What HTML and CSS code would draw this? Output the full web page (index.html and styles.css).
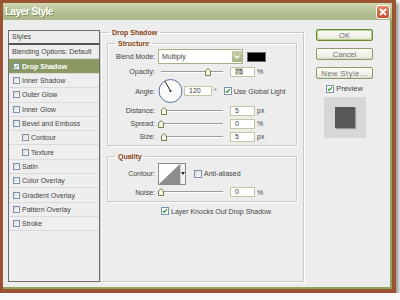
FILE: index.html
```html
<!DOCTYPE html>
<html lang="en">
<head>
  <meta charset="UTF-8" />
  <title>Layer Style</title>
  <link rel="stylesheet" href="styles.css">
</head>
<body>

  <div class="window">
    <div class="title-bar">
      <span class="title">Layer Style</span>
      <span class="close-btn">
        <svg width="8" height="8" viewBox="0 0 8 8"><path d="M1 1 L7 7 M7 1 L1 7" stroke="#fff" stroke-width="1.8"/></svg>
      </span>
    </div>

    <div class="dialog">
      <div class="style-list">
        <div class="list-head">Styles</div>
        <div class="list-row blend">Blending Options: Default</div>
        <div class="list-row selected">
          <span class="check on"><svg viewBox="0 0 8 8" width="100%" height="100%"><path d="M1.2 3.8 L3 5.8 L6.6 1.6" fill="none" stroke="#1d9a1d" stroke-width="1.6"/></svg></span>Drop Shadow
        </div>
        <div class="list-row"><span class="check"></span>Inner Shadow</div>
        <div class="list-row"><span class="check"></span>Outer Glow</div>
        <div class="list-row"><span class="check"></span>Inner Glow</div>
        <div class="list-row"><span class="check"></span>Bevel and Emboss</div>
        <div class="list-row sub"><span class="check"></span>Contour</div>
        <div class="list-row sub"><span class="check"></span>Texture</div>
        <div class="list-row"><span class="check"></span>Satin</div>
        <div class="list-row"><span class="check"></span>Color Overlay</div>
        <div class="list-row"><span class="check"></span>Gradient Overlay</div>
        <div class="list-row"><span class="check"></span>Pattern Overlay</div>
        <div class="list-row"><span class="check"></span>Stroke</div>
      </div>

      <fieldset class="main-group">
        <legend>Drop Shadow</legend>

        <fieldset class="sub-group">
          <legend>Structure</legend>
          <div class="row blend-row">
            <label>Blend Mode:</label>
            <div class="select">Multiply
              <span class="drop-btn"><svg width="6" height="4" viewBox="0 0 6 4"><path d="M0.5 0.5 L3 3 L5.5 0.5" fill="none" stroke="#fff" stroke-width="1.2"/></svg></span>
            </div>
            <span class="swatch"></span>
          </div>
          <div class="row opacity-row">
            <label>Opacity:</label>
            <div class="slider"><svg class="thumb" style="margin-left:47px" width="6" height="8" viewBox="0 0 6 8"><path d="M0.5 3 L3 0.5 L5.5 3 L5.5 7.5 L0.5 7.5 Z" fill="#f4f6ec" stroke="#6f8048"/></svg></div>
            <span class="field"><span class="hl">75</span></span><span class="unit">%</span>
          </div>
          <div class="row angle-row">
            <label>Angle:</label>
            <svg class="dial" width="25" height="26" viewBox="0 0 25 26">
              <circle cx="12.5" cy="13" r="11.5" fill="#fbfbfb" stroke="#5d6e9c"/>
              <path d="M12.5 13 L6.8 3.1" stroke="#222" stroke-width="1"/>
              <circle cx="12.5" cy="13" r="1.1" fill="#222"/>
            </svg>
            <span class="field wide">120</span><span class="unit">°</span>
            <span class="check box on gap"><svg viewBox="0 0 8 8" width="100%" height="100%"><path d="M1.2 3.8 L3 5.8 L6.6 1.6" fill="none" stroke="#1d9a1d" stroke-width="1.6"/></svg></span>
            <span class="check-label">Use Global Light</span>
          </div>
          <div class="row">
            <label>Distance:</label>
            <div class="slider"><svg class="thumb" style="margin-left:3px" width="6" height="8" viewBox="0 0 6 8"><path d="M0.5 3 L3 0.5 L5.5 3 L5.5 7.5 L0.5 7.5 Z" fill="#f4f6ec" stroke="#6f8048"/></svg></div>
            <span class="field">5</span><span class="unit">px</span>
          </div>
          <div class="row">
            <label>Spread:</label>
            <div class="slider"><svg class="thumb" style="margin-left:0px" width="6" height="8" viewBox="0 0 6 8"><path d="M0.5 3 L3 0.5 L5.5 3 L5.5 7.5 L0.5 7.5 Z" fill="#f4f6ec" stroke="#6f8048"/></svg></div>
            <span class="field">0</span><span class="unit">%</span>
          </div>
          <div class="row">
            <label>Size:</label>
            <div class="slider"><svg class="thumb" style="margin-left:3px" width="6" height="8" viewBox="0 0 6 8"><path d="M0.5 3 L3 0.5 L5.5 3 L5.5 7.5 L0.5 7.5 Z" fill="#f4f6ec" stroke="#6f8048"/></svg></div>
            <span class="field">5</span><span class="unit">px</span>
          </div>
        </fieldset>

        <fieldset class="sub-group quality">
          <legend>Quality</legend>
          <div class="row contour-row">
            <label>Contour:</label>
            <div class="contour">
              <svg width="21" height="20" viewBox="0 0 21 20"><rect width="21" height="20" fill="#fff"/><path d="M0 20 L21 0 L21 20 Z" fill="#8e8e8e"/></svg>
              <span class="contour-arrow"><svg width="4" height="3" viewBox="0 0 4 3"><path d="M0 0 L4 0 L2 3 Z" fill="#222"/></svg></span>
            </div>
            <span class="check box gap-wide"></span>
            <span class="check-label">Anti-aliased</span>
          </div>
          <div class="row noise-row">
            <label>Noise:</label>
            <div class="slider"><svg class="thumb" style="margin-left:0px" width="6" height="8" viewBox="0 0 6 8"><path d="M0.5 3 L3 0.5 L5.5 3 L5.5 7.5 L0.5 7.5 Z" fill="#f4f6ec" stroke="#6f8048"/></svg></div>
            <span class="field">0</span><span class="unit">%</span>
          </div>
        </fieldset>

        <div class="row knock-row">
          <span class="check box on"><svg viewBox="0 0 8 8" width="100%" height="100%"><path d="M1.2 3.8 L3 5.8 L6.6 1.6" fill="none" stroke="#1d9a1d" stroke-width="1.6"/></svg></span>
          <span class="check-label">Layer Knocks Out Drop Shadow</span>
        </div>
      </fieldset>

      <div class="actions">
        <div class="btn default">OK</div>
        <div class="btn">Cancel</div>
        <div class="btn new-style">New Style...</div>
        <div class="preview-row">
          <span class="check box on"><svg viewBox="0 0 8 8" width="100%" height="100%"><path d="M1.2 3.8 L3 5.8 L6.6 1.6" fill="none" stroke="#1d9a1d" stroke-width="1.6"/></svg></span>
          <span class="preview-label">Preview</span>
        </div>
        <div class="preview-box"><span class="preview-swatch"></span></div>
      </div>
    </div>
  </div>

</body>
</html>
```

FILE: styles.css
```css
* {
  box-sizing: border-box;
}

body {
  margin: 0;
  background: #f8f8f8;
  font-family: "Liberation Sans", Arial, sans-serif;
  font-size: 7px;
  color: #444;
}

.window {
  width: 396px;
  height: 293px;
  display: flex;
  flex-direction: column;
  border: 3px solid #9c5331;
  border-right-width: 4px;
  border-bottom-width: 4px;
  box-shadow: 3px 3px 3px rgba(0, 0, 0, 0.35);
}

.title-bar {
  height: 17px;
  display: flex;
  justify-content: space-between;
  align-items: center;
  padding: 0 2px;
  background: linear-gradient(#cfd8b3, #b8c496 45%, #a9b685);
}

.title {
  color: #fff;
  font-size: 10px;
  font-weight: bold;
  letter-spacing: -0.5px;
  text-shadow: 1px 1px 0 rgba(70, 80, 40, 0.45);
}

.close-btn {
  width: 14px;
  height: 14px;
  display: flex;
  justify-content: center;
  align-items: center;
  border: 1px solid #fff;
  border-radius: 3px;
  background: linear-gradient(#e68d6a, #c84a2d);
}

.dialog {
  flex: 1;
  display: flex;
  padding: 10px 7px 5px 5px;
  background: #ededed;
  border-right: 2px solid #8ea45f;
  border-bottom: 2px solid #8ea45f;
}

/* style list on the left */
.style-list {
  width: 92px;
  border: 1px solid #6e6e6e;
  background: #eeeeee;
}

.list-head {
  height: 14px;
  line-height: 12px;
  padding-left: 3px;
  border-bottom: 2px solid #555;
}

.list-row {
  height: 14.3px;
  display: flex;
  align-items: center;
  gap: 2px;
  padding-left: 4px;
  border-bottom: 1px solid #dadada;
}

.list-row.blend {
  height: 14px;
  padding-left: 3px;
}

.list-row.selected {
  height: 15px;
  background: #8b9a63;
  color: #fff;
  font-weight: bold;
}

.list-row.sub {
  padding-left: 13px;
}

.check {
  width: 7px;
  height: 7px;
  display: inline-flex;
  flex-shrink: 0;
  border: 1px solid #7b90ab;
  background: linear-gradient(135deg, #d9d9d2, #fff);
}

.check.on {
  background: #fff;
}

.check.box {
  width: 8px;
  height: 8px;
}

.check.gap {
  margin-left: 7px;
}

.check.gap-wide {
  margin-left: 8px;
}

.check-label {
  margin-left: 2px;
}

/* groups */
fieldset {
  margin: 0;
  min-width: 0;
  border: 1px solid #cacac5;
  box-shadow: inset 1px 1px 0 #fff, 1px 1px 0 #fff;
}

legend {
  padding: 0 3px;
  line-height: 9px;
  font-weight: bold;
  color: #8a4213;
}

.main-group {
  width: 204px;
  margin-top: -2px;
  padding: 0 6px;
}

.main-group > legend {
  margin-left: 2px;
}

.sub-group {
  margin-top: 2px;
  padding: 1px 0 2px 6px;
}

.sub-group > legend {
  margin-left: 1px;
}

.quality {
  margin-top: 6px;
}

.row {
  height: 13px;
  display: flex;
  align-items: center;
}

.row label {
  width: 41px;
  margin-right: 3px;
  text-align: right;
}

.blend-row {
  height: 15px;
}

.opacity-row {
  margin-top: 1px;
}

.angle-row {
  height: 26px;
}

.contour-row {
  height: 23px;
}

.noise-row {
  height: 14px;
}

.knock-row {
  height: 12px;
  margin-top: 3px;
  padding-left: 54px;
}

.select {
  width: 85px;
  height: 15px;
  display: flex;
  align-items: center;
  padding-left: 3px;
  border: 1px solid #a6b38a;
  background: #fff;
}

.drop-btn {
  width: 10px;
  align-self: stretch;
  display: flex;
  justify-content: center;
  align-items: center;
  margin: 1px 0 1px auto;
  background: linear-gradient(#c6cfa9, #a5b281);
}

.swatch {
  width: 19px;
  height: 10px;
  margin-left: 4px;
  border: 1px solid #6a6a6a;
  background: #000;
}

.slider {
  width: 66px;
  height: 8px;
  display: flex;
  align-items: center;
  background:
    linear-gradient(#9c9c9c, #9c9c9c) 3px 3px / 62px 1px no-repeat,
    linear-gradient(#fff, #fff) 3px 4px / 62px 1px no-repeat;
}

.thumb {
  display: block;
  flex-shrink: 0;
}

.field {
  width: 25px;
  height: 10px;
  margin-left: 6px;
  padding-left: 4px;
  line-height: 8px;
  border: 1px solid #bfc8a6;
  background: #fff;
}

.field.wide {
  width: 28px;
  margin-left: 1px;
}

.hl {
  background: #cfd5bd;
}

.unit {
  margin-left: 2px;
}

.dial {
  display: block;
}

.contour {
  width: 28px;
  height: 22px;
  display: flex;
  border: 1px solid #8a8a8a;
  background: #fff;
}

.contour svg {
  display: block;
}

.contour-arrow {
  flex: 1;
  display: flex;
  justify-content: center;
  align-items: center;
  border-left: 1px solid #cfcfcf;
  background: #f4f4f4;
}

/* buttons column */
.actions {
  width: 57px;
  margin-left: 12px;
  display: flex;
  flex-direction: column;
  align-items: center;
}

.btn {
  width: 57px;
  height: 12px;
  display: flex;
  justify-content: center;
  align-items: center;
  margin-bottom: 7px;
  border: 1px solid #8a9a68;
  border-radius: 2px;
  background: linear-gradient(#fdfdf8, #efeee4 75%, #d9d8c8);
  color: #707070;
  font-size: 7.5px;
}

.btn.default {
  margin-top: -1px;
  border-color: #6a8a36;
  box-shadow: inset 0 0 0 1px #b7cd8f;
}

.btn.new-style {
  margin-bottom: 5px;
  letter-spacing: 0.5px;
}

.preview-row {
  height: 9px;
  display: flex;
  align-items: center;
}

.preview-label {
  margin-left: 2px;
  font-size: 7.5px;
}

.preview-box {
  width: 42px;
  height: 41px;
  margin-top: 4px;
  display: flex;
  justify-content: center;
  align-items: center;
  background: #d7d7d7;
}

.preview-swatch {
  width: 20px;
  height: 21px;
  background: #575757;
  box-shadow: 1px 1px 1px rgba(0, 0, 0, 0.3);
}
```
